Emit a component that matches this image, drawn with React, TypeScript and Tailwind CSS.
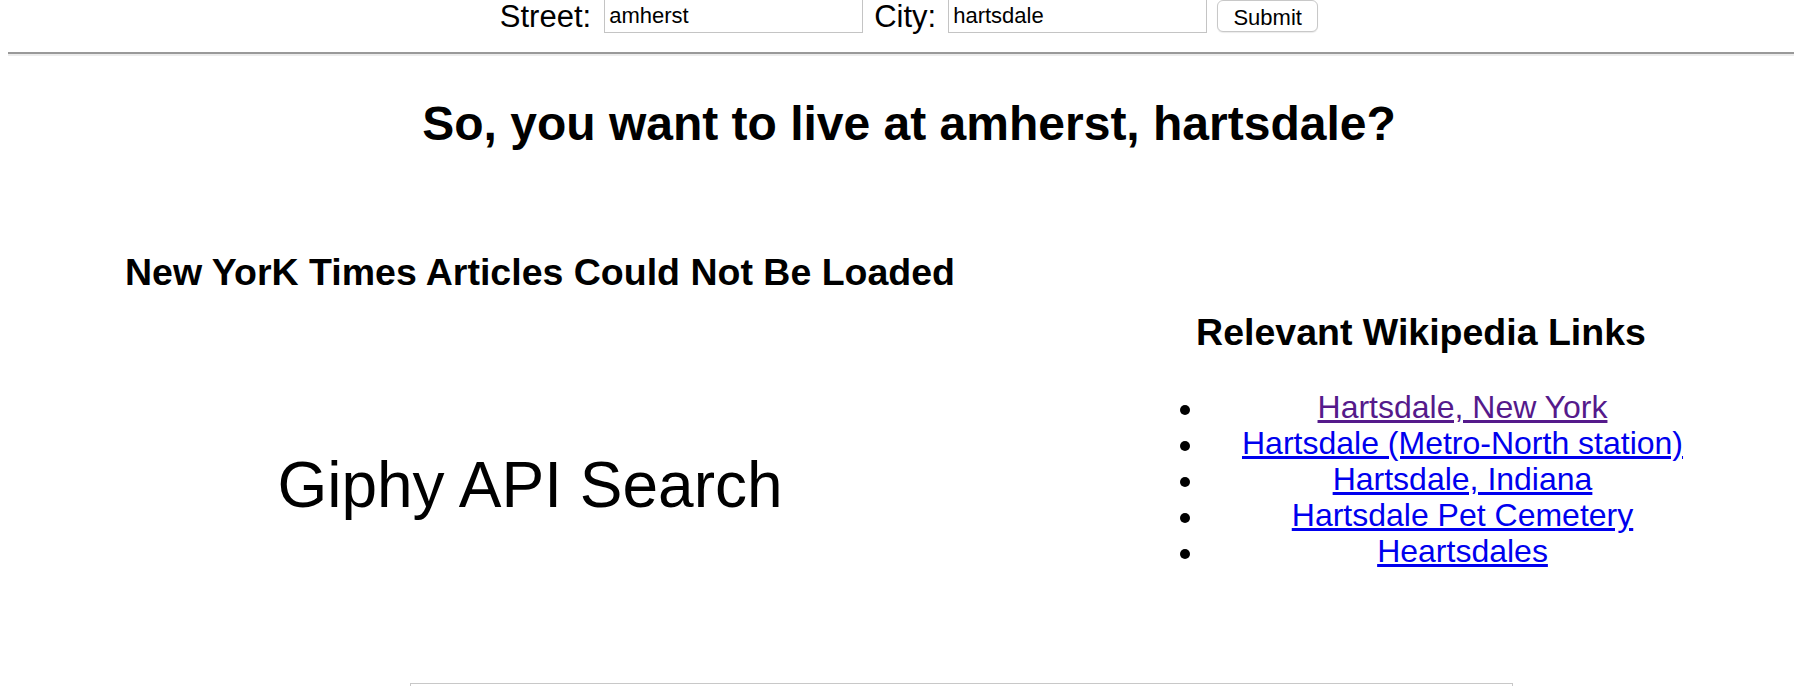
import { useState } from "react";

const links = [
  { title: "Hartsdale, New York", visited: true },
  { title: "Hartsdale (Metro-North station)", visited: false },
  { title: "Hartsdale, Indiana", visited: false },
  { title: "Hartsdale Pet Cemetery", visited: false },
  { title: "Heartsdales", visited: false },
];

export default function App() {
  const [street, setStreet] = useState("amherst");
  const [city, setCity] = useState("hartsdale");

  return (
    <div className="h-[686px] w-full overflow-hidden bg-white text-black font-['Liberation_Sans',Arial,sans-serif]">
      <div className="ml-2 w-[1802px]">
        <form
          className="-mt-px flex h-[34px] items-center justify-center"
          onSubmit={(e) => e.preventDefault()}
        >
          <label className="text-[31px] leading-none">Street:</label>
          <input
            value={street}
            onChange={(e) => setStreet(e.target.value)}
            className="ml-[13px] h-[34px] w-[259px] border border-[#c4c4c4] pl-[4px] text-[22px] outline-none"
          />
          <label className="ml-[11px] text-[31px] leading-none">City:</label>
          <input
            value={city}
            onChange={(e) => setCity(e.target.value)}
            className="ml-[12px] h-[34px] w-[259px] border border-[#c4c4c4] pl-[4px] text-[22px] outline-none"
          />
          <button
            type="submit"
            className="ml-[10px] h-[32px] w-[101px] rounded-[6px] border border-[#c8c8c8] bg-white text-[22px] shadow-[0_1px_1px_rgba(0,0,0,0.08)]"
          >
            Submit
          </button>
        </form>

        <div className="mt-[19px] border-t-2 border-b-2 border-t-[#999999] border-b-[#ececec]" />

        <h1 className="mt-[40px] text-center text-[48px] font-bold leading-[55px]">
          So, you want to live at {street}, {city}?
        </h1>

        <div className="grid grid-cols-[1064px_738px]">
          <div className="pt-[100px]">
            <h2 className="text-center text-[37.5px] font-bold leading-[42px]">
              New YorK Times Articles Could Not Be Loaded
            </h2>
            <p className="mt-[155px] pr-[20px] text-center text-[64px] leading-[74px]">
              Giphy API Search
            </p>
          </div>

          <div className="pt-[160px]">
            <h2 className="pr-[40px] text-center text-[37.5px] font-bold leading-[42px]">
              Relevant Wikipedia Links
            </h2>
            <ul className="mt-[36px] pl-[108px] pr-[75px]">
              {links.map((l) => (
                <li key={l.title} className="flex items-start">
                  <span className="mt-[16px] h-[10px] w-[10px] rounded-full bg-black" />
                  <a
                    href="#"
                    className={
                      "flex-1 text-center text-[32px] leading-[36px] underline " +
                      (l.visited ? "text-[#551a8b]" : "text-[#0000ee]")
                    }
                  >
                    {l.title}
                  </a>
                </li>
              ))}
            </ul>
          </div>
        </div>

        <div className="ml-[402px] mt-[114px] h-[40px] w-[1103px] border border-[#c8c8c8]" />
      </div>
    </div>
  );
}
